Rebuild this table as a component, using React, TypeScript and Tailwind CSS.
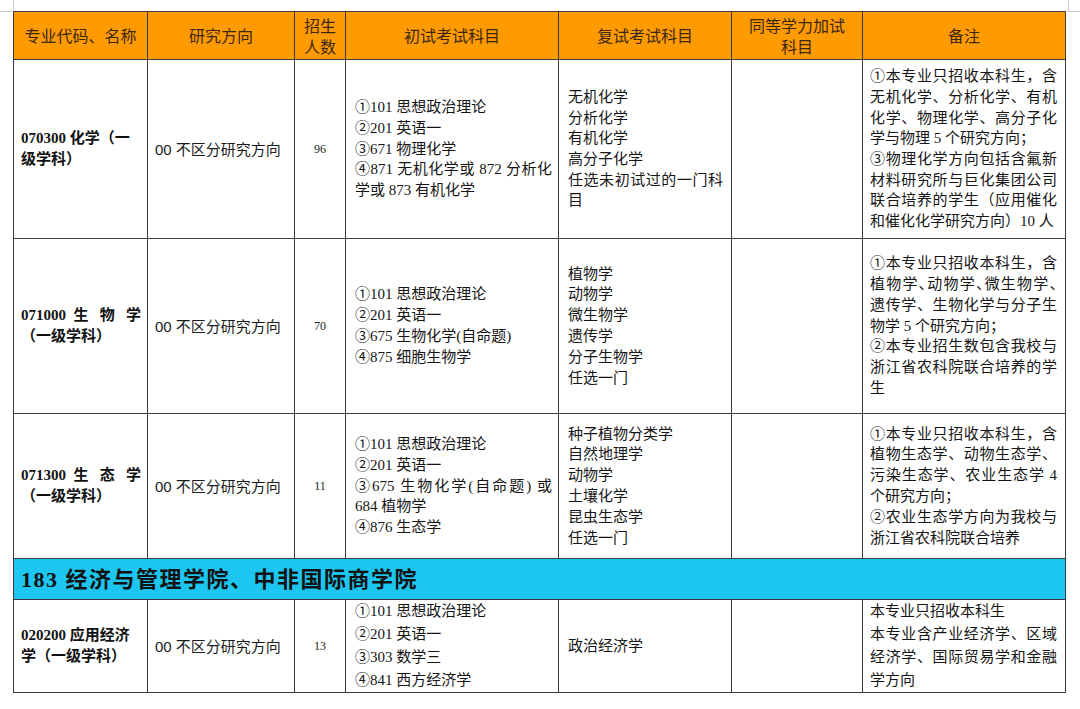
import React from "react";

type L = { t: React.ReactNode; j?: boolean };

const Lines = ({ lines, cls }: { lines: L[]; cls?: string }) => (
  <div className={cls}>
    {lines.map((l, i) => (
      <div key={i} className={l.j ? "text-justify [text-align-last:justify]" : ""}>
        {l.t}
      </div>
    ))}
  </div>
);

const H = "[font-feature-settings:'halt']";
const serif = "font-['Liberation_Serif','Noto_Sans_CJK_SC',serif]";
const td = "border border-[#3a3a3a] align-middle";

const Code = ({ a, b, j = true }: { a: React.ReactNode; b: string; j?: boolean }) => (
  <div className={`${serif} font-bold text-[15px] leading-[21px] text-[#111]`}>
    <div className={j ? "text-justify [text-align-last:justify]" : "whitespace-nowrap"}>{a}</div>
    <div>{b}</div>
  </div>
);

const Dir = () => (
  <div className="font-['Liberation_Sans','Noto_Sans_CJK_SC',sans-serif] text-[15px] leading-[21px] text-[#1a1a1a] whitespace-nowrap">
    00 不区分研究方向
  </div>
);

const Num = ({ n }: { n: string }) => (
  <div className={`${serif} text-[12px] text-center text-[#222]`}>{n}</div>
);

const body = `${serif} text-[15px] text-[#151515]`;

type Row = {
  h: string;
  code: [React.ReactNode, string];
  cj: boolean;
  n: string;
  a: L[];
  b: L[];
  c: L[];
  lh: string;
};

const rows: Row[] = [
  {
    h: "h-[179px]",
    code: ["070300 化学（一", "级学科）"],
    cj: false,
    n: "96",
    lh: "leading-[20.7px]",
    a: [
      { t: "①101 思想政治理论" },
      { t: "②201 英语一" },
      { t: "③671 物理化学" },
      { t: "④871 无机化学或 872 分析化", j: true },
      { t: "学或 873 有机化学" },
    ],
    b: [
      { t: "无机化学" },
      { t: "分析化学" },
      { t: "有机化学" },
      { t: "高分子化学" },
      { t: "任选未初试过的一门科", j: true },
      { t: "目" },
    ],
    c: [
      { t: "①本专业只招收本科生，含", j: true },
      { t: "无机化学、分析化学、有机", j: true },
      { t: "化学、物理化学、高分子化", j: true },
      { t: "学与物理 5 个研究方向；" },
      { t: "③物理化学方向包括含氟新", j: true },
      { t: "材料研究所与巨化集团公司", j: true },
      { t: "联合培养的学生（应用催化", j: true },
      { t: "和催化化学研究方向）10 人" },
    ],
  },
  {
    h: "h-[175px]",
    code: ["071000 生 物 学", "（一级学科）"],
    cj: true,
    n: "70",
    lh: "leading-[20.8px]",
    a: [
      { t: "①101 思想政治理论" },
      { t: "②201 英语一" },
      { t: "③675 生物化学(自命题)" },
      { t: "④875 细胞生物学" },
    ],
    b: [
      { t: "植物学" },
      { t: "动物学" },
      { t: "微生物学" },
      { t: "遗传学" },
      { t: "分子生物学" },
      { t: "任选一门" },
    ],
    c: [
      { t: "①本专业只招收本科生，含", j: true },
      {
        t: (
          <>
            植物学<span className={H}>、</span>动物学<span className={H}>、</span>微生物学
            <span className={H}>、</span>
          </>
        ),
        j: true,
      },
      { t: "遗传学、生物化学与分子生", j: true },
      { t: "物学 5 个研究方向；" },
      { t: "②本专业招生数包含我校与", j: true },
      { t: "浙江省农科院联合培养的学", j: true },
      { t: "生" },
    ],
  },
  {
    h: "h-[145px]",
    code: ["071300 生 态 学", "（一级学科）"],
    cj: true,
    n: "11",
    lh: "leading-[20.8px]",
    a: [
      { t: "①101 思想政治理论" },
      { t: "②201 英语一" },
      { t: "③675 生物化学(自命题) 或", j: true },
      { t: "684 植物学" },
      { t: "④876 生态学" },
    ],
    b: [
      { t: "种子植物分类学" },
      { t: "自然地理学" },
      { t: "动物学" },
      { t: "土壤化学" },
      { t: "昆虫生态学" },
      { t: "任选一门" },
    ],
    c: [
      { t: "①本专业只招收本科生，含", j: true },
      { t: "植物生态学、动物生态学、", j: true },
      { t: "污染生态学、农业生态学 4", j: true },
      { t: "个研究方向；" },
      { t: "②农业生态学方向为我校与", j: true },
      { t: "浙江省农科院联合培养" },
    ],
  },
];

export default function App() {
  return (
    <div className="relative w-[1080px] h-[709px] bg-white">
      <span className="absolute left-[13px] top-0 w-px h-[10px] bg-[#c8c8c8]" />
      <span className="absolute left-0 top-[11px] w-[12px] h-px bg-[#c8c8c8]" />
      <span className="absolute left-[1068px] top-0 w-px h-[11px] bg-[#c8c8c8]" />
      <span className="absolute left-[1068px] top-[11px] w-[12px] h-px bg-[#c8c8c8]" />
      <div className="pt-[11px] pl-[13px]">
        <table className="table-fixed border-collapse w-[1052px]">
          <colgroup>
            <col className="w-[134px]" />
            <col className="w-[147px]" />
            <col className="w-[51px]" />
            <col className="w-[213px]" />
            <col className="w-[173px]" />
            <col className="w-[131px]" />
            <col className="w-[203px]" />
          </colgroup>
          <tbody>
            <tr className="h-[48px] bg-[#ff9a00] font-['Noto_Sans_CJK_SC',sans-serif] text-[16px] leading-[21px] text-[#3b2812] text-center">
              <td className={td}>专业代码、名称</td>
              <td className={td}>研究方向</td>
              <td className={td}>
                <div>招生</div>
                <div>人数</div>
              </td>
              <td className={td}>初试考试科目</td>
              <td className={td}>复试考试科目</td>
              <td className={td}>
                <div>同等学力加试</div>
                <div>科目</div>
              </td>
              <td className={td}>备注</td>
            </tr>
            {rows.map((r, i) => (
              <tr key={i} className={r.h}>
                <td className={`${td} pl-[7px] pr-[6px]`}>
                  <Code a={r.code[0]} b={r.code[1]} j={r.cj} />
                </td>
                <td className={`${td} pl-[7px]`}>
                  <Dir />
                </td>
                <td className={td}>
                  <Num n={r.n} />
                </td>
                <td className={`${td} pl-[9px] pr-[6px]`}>
                  <Lines lines={r.a} cls={`${body} ${r.lh}`} />
                </td>
                <td className={`${td} pl-[9px] pr-[8px]`}>
                  <Lines lines={r.b} cls={`${body} ${r.lh}`} />
                </td>
                <td className={td}></td>
                <td className={`${td} pl-[7px] pr-[8px]`}>
                  <Lines lines={r.c} cls={`${body} ${r.lh}`} />
                </td>
              </tr>
            ))}
            <tr className="h-[41px] bg-[#1cc6f0]">
              <td
                colSpan={7}
                className={`${td} pl-[7px] ${serif} font-bold text-[22px] tracking-[1.5px] text-[#111]`}
              >
                183 经济与管理学院、中非国际商学院
              </td>
            </tr>
            <tr className="h-[92px]">
              <td className={`${td} pl-[7px] pr-[6px]`}>
                <Code a="020200 应用经济" b="学（一级学科）" j={false} />
              </td>
              <td className={`${td} pl-[7px]`}>
                <Dir />
              </td>
              <td className={td}>
                <Num n="13" />
              </td>
              <td className={`${td} pl-[9px] pr-[6px]`}>
                <Lines
                  cls={`${body} leading-[23px]`}
                  lines={[
                    { t: "①101 思想政治理论" },
                    { t: "②201 英语一" },
                    { t: "③303 数学三" },
                    { t: "④841 西方经济学" },
                  ]}
                />
              </td>
              <td className={`${td} pl-[9px] pr-[8px]`}>
                <Lines cls={`${body} leading-[23px]`} lines={[{ t: "政治经济学" }]} />
              </td>
              <td className={td}></td>
              <td className={`${td} pl-[7px] pr-[8px]`}>
                <Lines
                  cls={`${body} leading-[23px]`}
                  lines={[
                    { t: "本专业只招收本科生" },
                    { t: "本专业含产业经济学、区域", j: true },
                    { t: "经济学、国际贸易学和金融", j: true },
                    { t: "学方向" },
                  ]}
                />
              </td>
            </tr>
          </tbody>
        </table>
      </div>
    </div>
  );
}
